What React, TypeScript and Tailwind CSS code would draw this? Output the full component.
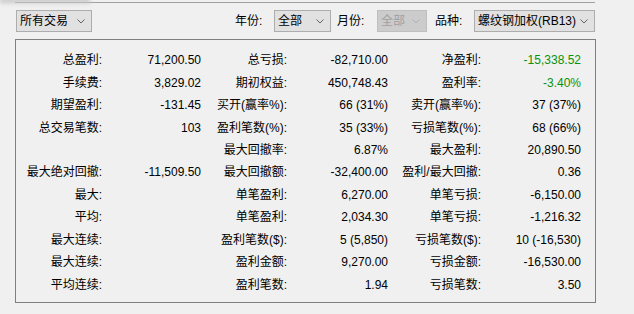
import React from 'react';

type Cell = { label?: string; value?: string; green?: boolean };
type Row = [Cell, Cell, Cell];

const rows: Row[] = [
  [{ label: '总盈利', value: '71,200.50' }, { label: '总亏损', value: '-82,710.00' }, { label: '净盈利', value: '-15,338.52', green: true }],
  [{ label: '手续费', value: '3,829.02' }, { label: '期初权益', value: '450,748.43' }, { label: '盈利率', value: '-3.40%', green: true }],
  [{ label: '期望盈利', value: '-131.45' }, { label: '买开(赢率%)', value: '66 (31%)' }, { label: '卖开(赢率%)', value: '37 (37%)' }],
  [{ label: '总交易笔数', value: '103' }, { label: '盈利笔数(%)', value: '35 (33%)' }, { label: '亏损笔数(%)', value: '68 (66%)' }],
  [{}, { label: '最大回撤率', value: '6.87%' }, { label: '最大盈利', value: '20,890.50' }],
  [{ label: '最大绝对回撤', value: '-11,509.50' }, { label: '最大回撤额', value: '-32,400.00' }, { label: '盈利/最大回撤', value: '0.36' }],
  [{ label: '最大' }, { label: '单笔盈利', value: '6,270.00' }, { label: '单笔亏损', value: '-6,150.00' }],
  [{ label: '平均' }, { label: '单笔盈利', value: '2,034.30' }, { label: '单笔亏损', value: '-1,216.32' }],
  [{ label: '最大连续' }, { label: '盈利笔数($)', value: '5 (5,850)' }, { label: '亏损笔数($)', value: '10 (-16,530)' }],
  [{ label: '最大连续' }, { label: '盈利金额', value: '9,270.00' }, { label: '亏损金额', value: '-16,530.00' }],
  [{ label: '平均连续' }, { label: '盈利笔数', value: '1.94' }, { label: '亏损笔数', value: '3.50' }],
];

const labelWidths = ['w-[86px]', 'w-[86px]', 'w-[93px]'];
const valueWidths = ['w-[99px]', 'w-[101px]', 'w-[100px]'];

function Chevron({ color = '#606060' }: { color?: string }) {
  return (
    <svg width="8" height="5" viewBox="0 0 8 5" className="shrink-0">
      <polyline points="0.5,0.5 4,4 7.5,0.5" fill="none" stroke={color} strokeWidth="1" />
    </svg>
  );
}

function Select({ text, width, disabled }: { text: string; width: string; disabled?: boolean }) {
  return (
    <div
      className={`${width} h-[22px] flex items-center justify-between pl-[3px] pr-[6px] border ${
        disabled ? 'border-[#bfbfbf] bg-[#cccccc] text-[#a0a0a0]' : 'border-[#adadad] bg-[#e1e1e1] text-black'
      }`}
    >
      <span className="leading-[20px] whitespace-nowrap">{text}</span>
      <Chevron color={disabled ? '#b0b0b0' : '#606060'} />
    </div>
  );
}

export default function App() {
  return (
    <div
      className="relative w-[634px] h-[314px] bg-[#f0f0f0] overflow-hidden text-[12px] text-black"
      style={{ fontFamily: '"Liberation Sans", "Noto Sans CJK SC", sans-serif' }}
    >
      {/* soft shadow left over from a window above */}
      <div className="absolute left-0 top-[-2px] w-[90px] h-[5px] bg-[#c8c8c8] blur-[2px]" />

      <div className="h-[2px]" />
      <div className="ml-[15px] w-[580px] h-[1px] bg-[#a0a0a0]" />

      <div className="mt-[7px] flex items-center h-[22px]">
        <div className="ml-[16px]">
          <Select text="所有交易" width="w-[76px]" />
        </div>
        <div className="ml-[143px] w-[39px] whitespace-nowrap">年份:</div>
        <Select text="全部" width="w-[57px]" />
        <div className="ml-[6px] w-[40px] whitespace-nowrap">月份:</div>
        <Select text="全部" width="w-[50px]" disabled />
        <div className="ml-[8px] w-[39px] whitespace-nowrap">品种:</div>
        <Select text="螺纹钢加权(RB13)" width="w-[121px]" />
      </div>

      <div className="mt-[7px] ml-[15px] w-[581px] h-[264px] border border-[#7f7f7f] pt-[9px]">
        {rows.map((row, i) => (
          <div key={i} className="flex h-[22.45px] items-center">
            {row.map((c, j) => (
              <React.Fragment key={j}>
                <div className={`${labelWidths[j]} text-right whitespace-nowrap leading-[16px]`}>
                  {c.label ? `${c.label}:` : ''}
                </div>
                <div
                  className={`${valueWidths[j]} text-right whitespace-nowrap leading-[16px] ${
                    c.green ? 'text-[#0a930a]' : 'text-black'
                  }`}
                >
                  {c.value ?? ''}
                </div>
              </React.Fragment>
            ))}
          </div>
        ))}
      </div>
    </div>
  );
}
